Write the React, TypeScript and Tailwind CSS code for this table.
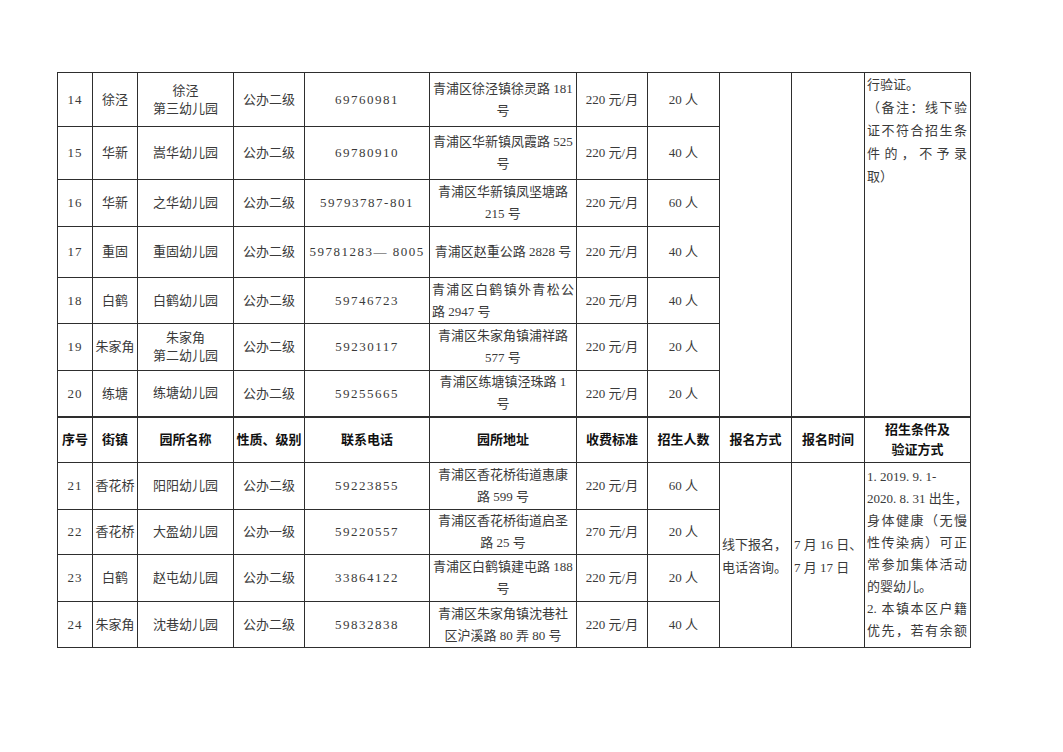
import React from 'react';

type Row = {
  no: string;
  town: string;
  name: string[];
  level: string;
  phone: string;
  addr: string[];
  addrLeft?: boolean;
  fee: string;
  count: string;
  h: string;
};

const topRows: Row[] = [
  { no: '14', town: '徐泾', name: ['徐泾', '第三幼儿园'], level: '公办二级', phone: '69760981', addr: ['青浦区徐泾镇徐灵路 181', '号'], fee: '220 元/月', count: '20 人', h: 'h-[54px]' },
  { no: '15', town: '华新', name: ['嵩华幼儿园'], level: '公办二级', phone: '69780910', addr: ['青浦区华新镇凤霞路 525', '号'], fee: '220 元/月', count: '40 人', h: 'h-[53px]' },
  { no: '16', town: '华新', name: ['之华幼儿园'], level: '公办二级', phone: '59793787-801', addr: ['青浦区华新镇凤坚塘路', '215 号'], fee: '220 元/月', count: '60 人', h: 'h-[47px]' },
  { no: '17', town: '重固', name: ['重固幼儿园'], level: '公办二级', phone: '59781283— 8005', addr: ['青浦区赵重公路 2828 号'], fee: '220 元/月', count: '40 人', h: 'h-[51px]' },
  { no: '18', town: '白鹤', name: ['白鹤幼儿园'], level: '公办二级', phone: '59746723', addr: ['青浦区白鹤镇外青松公', '路 2947 号'], addrLeft: true, fee: '220 元/月', count: '40 人', h: 'h-[46px]' },
  { no: '19', town: '朱家角', name: ['朱家角', '第二幼儿园'], level: '公办二级', phone: '59230117', addr: ['青浦区朱家角镇浦祥路', '577 号'], fee: '220 元/月', count: '20 人', h: 'h-[47px]' },
  { no: '20', town: '练塘', name: ['练塘幼儿园'], level: '公办二级', phone: '59255665', addr: ['青浦区练塘镇泾珠路 1', '号'], fee: '220 元/月', count: '20 人', h: 'h-[46px]' },
];

const bottomRows: Row[] = [
  { no: '21', town: '香花桥', name: ['阳阳幼儿园'], level: '公办二级', phone: '59223855', addr: ['青浦区香花桥街道惠康', '路 599 号'], fee: '220 元/月', count: '60 人', h: 'h-[47px]' },
  { no: '22', town: '香花桥', name: ['大盈幼儿园'], level: '公办一级', phone: '59220557', addr: ['青浦区香花桥街道启圣', '路 25 号'], fee: '270 元/月', count: '20 人', h: 'h-[45px]' },
  { no: '23', town: '白鹤', name: ['赵屯幼儿园'], level: '公办二级', phone: '33864122', addr: ['青浦区白鹤镇建屯路 188', '号'], fee: '220 元/月', count: '20 人', h: 'h-[47px]' },
  { no: '24', town: '朱家角', name: ['沈巷幼儿园'], level: '公办二级', phone: '59832838', addr: ['青浦区朱家角镇沈巷社', '区沪溪路 80 弄 80 号'], fee: '220 元/月', count: '40 人', h: 'h-[46px]' },
];

const cell = 'border border-[#2e2e2e] p-0 text-center align-middle';
const head = 'border border-[#2e2e2e] p-0 text-center align-middle font-bold text-[#111]';

// justified line, like the Word doc's distributed text
const J = ({ children }: { children: React.ReactNode }) => (
  <div className="whitespace-nowrap [text-align-last:justify]">{children}</div>
);
const L = ({ children }: { children: React.ReactNode }) => (
  <div className="whitespace-nowrap">{children}</div>
);

const DataRow = ({ r, extra }: { r: Row; extra?: React.ReactNode }) => (
  <tr className={r.h}>
    <td className={cell + ' tracking-[1px]'}>{r.no}</td>
    <td className={cell}>{r.town}</td>
    <td className={cell + ' leading-[18px]'}>
      {r.name.map((n) => (
        <div key={n}>{n}</div>
      ))}
    </td>
    <td className={cell}>{r.level}</td>
    <td className={cell + ' tracking-[1.5px] whitespace-nowrap'}>{r.phone}</td>
    <td className={cell + ' leading-[22px]'}>
      {r.addrLeft ? (
        <div className="px-[2px] text-left">
          <J>{r.addr[0]}</J>
          <L>{r.addr[1]}</L>
        </div>
      ) : (
        r.addr.map((a) => (
          <div key={a} className="whitespace-nowrap">
            {a}
          </div>
        ))
      )}
    </td>
    <td className={cell + ' whitespace-nowrap'}>{r.fee}</td>
    <td className={cell + ' whitespace-nowrap'}>{r.count}</td>
    {extra}
  </tr>
);

export default function App() {
  return (
    <div className="min-h-[752px] w-[1063px] bg-white pl-[57px] pt-[72px]">
      <table
        className="table-fixed border-collapse text-[13px] text-[#3a3a3a] w-[913px]"
        style={{ fontFamily: '"Liberation Serif", "Noto Sans CJK SC", serif' }}
      >
        <colgroup>
          <col className="w-[35px]" />
          <col className="w-[45px]" />
          <col className="w-[96px]" />
          <col className="w-[71px]" />
          <col className="w-[125px]" />
          <col className="w-[147px]" />
          <col className="w-[71px]" />
          <col className="w-[72px]" />
          <col className="w-[72px]" />
          <col className="w-[73px]" />
          <col className="w-[106px]" />
        </colgroup>
        <tbody>
          {topRows.map((r, i) => (
            <DataRow
              key={r.no}
              r={r}
              extra={
                i === 0 ? (
                  <>
                    <td rowSpan={7} className={cell}></td>
                    <td rowSpan={7} className={cell}></td>
                    <td rowSpan={7} className="border border-[#2e2e2e] p-0 align-top text-left leading-[23px]">
                      <div className="pl-[2px] pr-[3px]">
                        <L>行验证。</L>
                        <J>（备注：线下验</J>
                        <J>证不符合招生条</J>
                        <J>件的，不予录</J>
                        <L>取）</L>
                      </div>
                    </td>
                  </>
                ) : null
              }
            />
          ))}
          <tr className="h-[46px] border-t-2 border-[#2e2e2e]">
            <td className={head}>序号</td>
            <td className={head}>街镇</td>
            <td className={head}>园所名称</td>
            <td className={head + ' whitespace-nowrap'}>性质、级别</td>
            <td className={head}>联系电话</td>
            <td className={head}>园所地址</td>
            <td className={head}>收费标准</td>
            <td className={head}>招生人数</td>
            <td className={head}>报名方式</td>
            <td className={head}>报名时间</td>
            <td className={head + ' leading-[20px]'}>
              <div>招生条件及</div>
              <div>验证方式</div>
            </td>
          </tr>
          {bottomRows.map((r, i) => (
            <DataRow
              key={r.no}
              r={r}
              extra={
                i === 0 ? (
                  <>
                    <td rowSpan={4} className="border border-[#2e2e2e] p-0 align-middle text-left leading-[23px]">
                      <div className="pl-[2px] pt-[2px]">
                        <L>线下报名，</L>
                        <L>电话咨询。</L>
                      </div>
                    </td>
                    <td rowSpan={4} className="border border-[#2e2e2e] p-0 align-middle text-left leading-[23px]">
                      <div className="pl-[2px] pt-[2px]">
                        <L>7 月 16 日、</L>
                        <L>7 月 17 日</L>
                      </div>
                    </td>
                    <td rowSpan={4} className="border border-[#2e2e2e] p-0 align-top text-left leading-[22px]">
                      <div className="h-[182px] overflow-hidden pl-[2px] pr-[3px] pt-[3px]">
                        <L>1. 2019. 9. 1-</L>
                        <L>2020. 8. 31 出生，</L>
                        <J>身体健康（无慢</J>
                        <J>性传染病）可正</J>
                        <J>常参加集体活动</J>
                        <L>的婴幼儿。</L>
                        <J>2. 本镇本区户籍</J>
                        <J>优先，若有余额</J>
                      </div>
                    </td>
                  </>
                ) : null
              }
            />
          ))}
        </tbody>
      </table>
    </div>
  );
}
